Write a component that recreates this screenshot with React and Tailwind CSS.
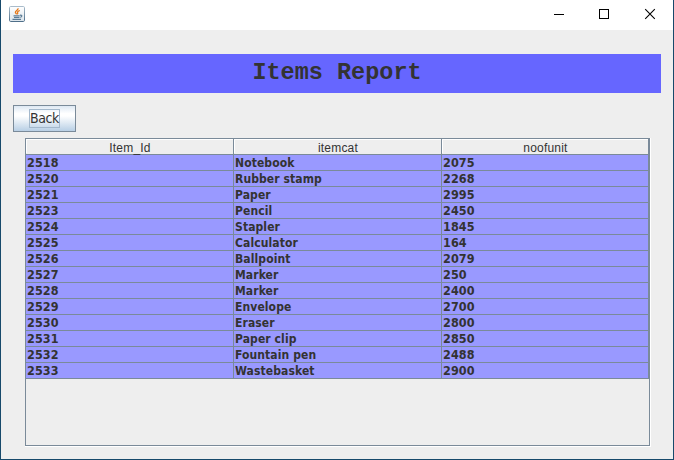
const columns = ['Item_Id', 'itemcat', 'noofunit'];

const rows = [
  ['2518', 'Notebook', '2075'],
  ['2520', 'Rubber stamp', '2268'],
  ['2521', 'Paper', '2995'],
  ['2523', 'Pencil', '2450'],
  ['2524', 'Stapler', '1845'],
  ['2525', 'Calculator', '164'],
  ['2526', 'Ballpoint', '2079'],
  ['2527', 'Marker', '250'],
  ['2528', 'Marker', '2400'],
  ['2529', 'Envelope', '2700'],
  ['2530', 'Eraser', '2800'],
  ['2531', 'Paper clip', '2850'],
  ['2532', 'Fountain pen', '2488'],
  ['2533', 'Wastebasket', '2900'],
];

const numberText = 'text-[12.5px] leading-[15px] tracking-[0.1px]';
const wordText = 'text-[12px] leading-[17px] tracking-[0.1px]';
const cellText = [numberText, wordText, numberText];

function JavaIcon() {
  return (
    <svg width="16" height="16" viewBox="0 0 16 16" fill="none">
      <defs>
        <linearGradient id="tile" x1="0" y1="0" x2="0" y2="1">
          <stop offset="0" stopColor="#fff" />
          <stop offset="1" stopColor="#dbe4eb" />
        </linearGradient>
        <linearGradient id="edge" x1="0" y1="0" x2="0" y2="1">
          <stop offset="0" stopColor="#a9bccb" />
          <stop offset="1" stopColor="#4f6f89" />
        </linearGradient>
      </defs>
      <rect x=".5" y=".5" width="15" height="15" rx="1.2" fill="url(#tile)" stroke="url(#edge)" />
      <path d="M9 2.300C9.600 4 6.200 4.700 6.400 6.300c.1.900 1.100 1.200 1.200 2.100M10.800 4.500C9 5.100 8.200 5.700 8.600 6.600c.3.700.3 1.100-.3 1.700" stroke="#e67817" strokeWidth="1.3" />
      <path d="M4.500 9.800h6.200M5 11.500h5.500M3.500 13.400h8.500M11 9.300c2.400-.6 2.400 1.500.3 2.100" stroke="#5b7b95" strokeWidth="1.2" />
    </svg>
  );
}

function TitleBar() {
  return (
    <header className="flex h-[30px] shrink-0 items-start justify-between bg-white">
      <div className="pt-[6px] pl-2">
        <JavaIcon />
      </div>
      <svg width="138" height="30" viewBox="0 0 138 30" fill="none" stroke="#000">
        <path d="M19 14.500h10M64.500 9.500h9v9h-9z" shapeRendering="crispEdges" />
        <path d="M110.200 9.200l9.600 9.600M119.800 9.200l-9.600 9.600" strokeWidth="1.1" />
      </svg>
    </header>
  );
}

function ItemsTable() {
  return (
    <div className="ml-3 mt-[6px] h-[309px] w-[626px] border-r border-b border-white">
      <div className="h-[308px] w-[625px] border border-[#7a8a99]">
        <div className="grid h-4 grid-cols-[208px_208px_207px] font-['Liberation_Sans',Arial,sans-serif] text-[12px] leading-[17px] text-[#333]">
          {columns.map((name) => (
            <div key={name} className="border-r border-b border-[#7a8a99]">
              <div className="h-[14px] border-t border-l border-white text-center tracking-[0.2px]">{name}</div>
            </div>
          ))}
        </div>
        {rows.map((row) => (
          <div
            key={row[0]}
            className="grid h-4 grid-cols-[208px_208px_207px] bg-[#9999ff] font-['DejaVu_Sans_Condensed','DejaVu_Sans',sans-serif] font-bold text-[#333] [font-stretch:condensed]"
          >
            {row.map((cell, i) => (
              <div key={i} className={`h-4 border-r border-b border-[#7a8a99] pl-px whitespace-nowrap ${cellText[i]}`}>
                {cell}
              </div>
            ))}
          </div>
        ))}
      </div>
    </div>
  );
}

export default function App() {
  return (
    <div className="flex h-[460px] w-[674px] flex-col overflow-hidden border-x border-b border-[#17496b] bg-[#eeeeee]">
      <TitleBar />
      <main className="px-3 pt-6">
        <h1 className="h-[39px] bg-[#6666ff] text-center font-['Courier_New','Liberation_Mono',monospace] text-[23.500px] leading-[37px] font-bold text-[#333]">
          Items Report
        </h1>
        <button className="mt-3 flex h-[27px] w-[63px] items-center justify-center border border-[#7a8a99] bg-[linear-gradient(180deg,#dde8f3_0%,#ffffff_30%,#ffffff_40%,#b8cfe5_100%)]">
          <span className="flex h-[19px] w-[31px] items-center justify-center border border-[#a3b8cc] font-['DejaVu_Sans_Condensed','DejaVu_Sans',sans-serif] text-[14px] leading-[17px] tracking-[-0.4px] text-[#333] [font-stretch:condensed]">
            Back
          </span>
        </button>
        <ItemsTable />
      </main>
    </div>
  );
}
